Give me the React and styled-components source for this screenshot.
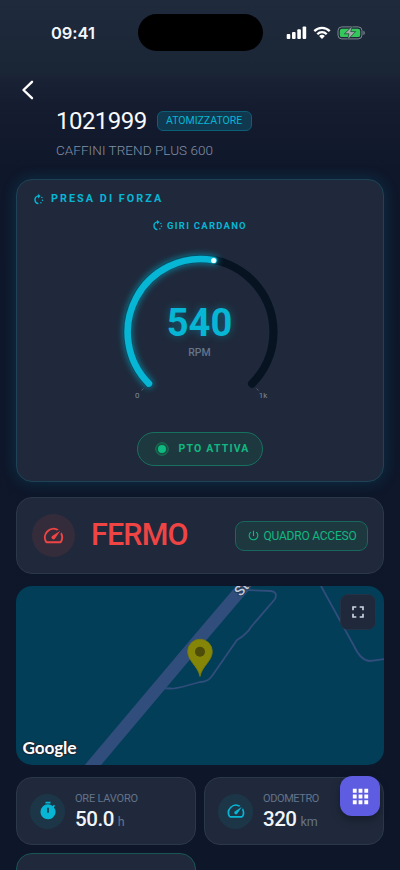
import React from "react";
import styled, { createGlobalStyle, css } from "styled-components";
import { MdSpeed, MdPowerSettingsNew, MdFullscreen, MdApps, MdTimer } from "react-icons/md";

const GlobalStyle = createGlobalStyle`
  * { box-sizing: border-box; }
  html, body { margin: 0; background: #0f172a; }
  body { font-family: Roboto, "Liberation Sans", sans-serif; overflow: hidden; }
  svg { display: block; flex: none; }
`;

const Screen = styled.main`
  position: relative;
  width: 400px;
  height: 870px;
  overflow: hidden;
  display: flex;
  flex-direction: column;
  background: linear-gradient(180deg, #1f2a3c 0, #1a2536 70px, #151c30 105px, #0f172a 170px, #0e172a 100%);
`;

const Label = styled.span`
  display: block;
  white-space: nowrap;
  line-height: 1;
  font-size: ${(p) => p.$size}px;
  font-weight: ${(p) => p.$weight || 400};
  letter-spacing: ${(p) => p.$track || 0}px;
  color: ${(p) => p.$color};
  ${(p) => p.$glow && css`text-shadow: 0 0 9px rgba(6, 182, 212, 0.4);`}
`;

const StatusBar = styled.div`
  flex: none;
  height: 64px;
  padding: 14px 35px 0 51px;
  display: grid;
  grid-template-columns: 87px 125px 1fr;
  align-items: start;
`;
const Clock = styled.span`
  padding-top: 10px;
  font: 600 16.5px/18px Inter, sans-serif;
  letter-spacing: -0.05px;
  color: #f3f6fc;
`;
const Island = styled.div`
  height: 37px;
  border-radius: 19px;
  background: #000;
`;
const StatusIcons = styled.div`
  display: flex;
  justify-content: flex-end;
  padding-top: 12px;
`;

const Header = styled.header`
  flex: none;
  height: 115px;
  padding: 16px 16px 0 20px;
`;
const BackButton = styled.button`
  display: block;
  border: 0;
  padding: 0;
  background: none;
`;
const TitleRow = styled.div`
  display: flex;
  align-items: center;
  gap: 10px;
  height: 22px;
  margin: 10px 0 0 36px;
`;
const TypeBadge = styled.div`
  display: flex;
  align-items: center;
  justify-content: center;
  width: 95px;
  height: 20px;
  border: 1px solid #0b5f77;
  border-radius: 6px;
  background: #10394f;
`;
const Subtitle = styled.div`
  margin: 12px 0 0 36px;
`;

const Content = styled.div`
  flex: none;
  display: flex;
  flex-direction: column;
  padding: 0 16px;
`;
const Panel = styled.section`
  border: 1px solid ${(p) => p.$border || "#2b384a"};
  border-radius: 16px;
  background: #1f293b;
`;
const PtoPanel = styled(Panel)`
  height: 303px;
  padding: 13px 17px 0 16px;
  display: flex;
  flex-direction: column;
  align-items: center;
  box-shadow: 0 0 15px rgba(6, 140, 180, 0.22);
`;
const SectionTitle = styled.div`
  align-self: flex-start;
  display: flex;
  align-items: center;
  gap: 7px;
  height: 13px;
`;
const GaugeTitle = styled.div`
  display: flex;
  align-items: center;
  gap: 4px;
  height: 13px;
  margin-top: 13px;
`;
const GaugeArea = styled.div`
  position: relative;
  width: 180px;
  height: 170px;
  margin-top: 3px;
`;
const Reading = styled.div`
  position: absolute;
  inset: 69px 0 auto;
  display: flex;
  flex-direction: column;
  align-items: center;
  gap: 6px;
`;
const PtoPill = styled.div`
  display: flex;
  align-items: center;
  gap: 10px;
  width: 126px;
  height: 34px;
  margin-top: 27px;
  padding-left: 17px;
  border: 1px solid #18705f;
  border-radius: 17px;
  background: #1e3840;
`;

const StatePanel = styled(Panel)`
  height: 77px;
  margin-top: 15px;
  padding: 0 15px 0 15px;
  display: flex;
  align-items: center;
`;
const IconDisc = styled.div`
  flex: none;
  display: grid;
  place-items: center;
  width: ${(p) => p.$size}px;
  height: ${(p) => p.$size}px;
  border-radius: 50%;
  color: ${(p) => p.$color};
  background: ${(p) => p.$bg};
`;
const StateName = styled.div`
  flex: 1;
  padding-left: 16px;
`;
const PowerBadge = styled.div`
  display: flex;
  align-items: center;
  justify-content: center;
  gap: 4px;
  width: 133px;
  height: 30px;
  border: 1px solid #18675c;
  border-radius: 9px;
  background: #1e3840;
  color: #10b981;
`;

const MapPanel = styled.section`
  position: relative;
  height: 179px;
  margin-top: 12px;
  overflow: hidden;
  border-radius: 16px;
  background: #023e58;
`;
const ExpandButton = styled.button`
  position: absolute;
  top: 8px;
  right: 8px;
  display: grid;
  place-items: center;
  width: 36px;
  height: 36px;
  padding: 0;
  border: 1px solid #243246;
  border-radius: 8px;
  background: #1f293b;
  color: #cbd5e1;
`;

const StatsGrid = styled.div`
  display: grid;
  grid-template-columns: 180px 180px;
  gap: 8px;
  margin-top: 12px;
`;
const StatCard = styled(Panel)`
  height: 68px;
  padding-left: 13px;
  display: flex;
  align-items: center;
  gap: 10px;
`;
const StatText = styled.div`
  display: flex;
  flex-direction: column;
  gap: 5px;
`;
const StatValue = styled.div`
  display: flex;
  align-items: baseline;
  gap: 4px;
`;
const AppsButton = styled.button`
  position: absolute;
  left: 340px;
  top: 776px;
  display: grid;
  place-items: center;
  width: 40px;
  height: 40px;
  padding: 0;
  border: 0;
  border-radius: 12px;
  background: #5e5ce0;
  color: #fff;
  box-shadow: 0 4px 10px rgba(0, 0, 0, 0.3);
`;

function PhoneStatus() {
  return (
    <StatusBar>
      <Clock>09:41</Clock>
      <Island />
      <StatusIcons>
        <svg width="79" height="14" viewBox="0 0 79 14">
          <g fill="#fff">
            <rect x="0.7" y="8" width="3.6" height="5" rx="1" />
            <rect x="6" y="6" width="3.6" height="7" rx="1" />
            <rect x="11.3" y="3.2" width="3.6" height="9.8" rx="1" />
            <rect x="16.6" y="0.4" width="3.6" height="12.6" rx="1" />
          </g>
          <g fill="none" stroke="#fff" strokeWidth="2.3">
            <path d="M28.3 5.1a10.8 10.8 0 0 1 15.4 0" />
            <path d="M31.3 8.2a6.5 6.5 0 0 1 9.4 0" />
          </g>
          <path d="M33.1 10.1a4.2 4.2 0 0 1 5.8 0L36 13.1z" fill="#fff" />
          <rect x="52" y="0.9" width="24" height="12" rx="3.8" fill="none" stroke="#7e8792" />
          <rect x="53.8" y="2.7" width="20.4" height="8.4" rx="2.2" fill="#34c759" />
          <path d="M77.4 4.8c1.8.5 1.8 3.7 0 4.2z" fill="#7e8792" />
          <path d="M66.6-.2 58.4 7.8h4.6l-1.6 6.2 8.2-8.4h-4.9z" fill="#a3aaa9" stroke="#1f4a3b" strokeWidth=".8" />
        </svg>
      </StatusIcons>
    </StatusBar>
  );
}

function RotateIcon() {
  return (
    <svg width="11" height="11" viewBox="0 0 11 11">
      <path d="M5.4 9.6A3.9 3.9 0 0 1 4.7 2h1" fill="none" stroke="#06b6d4" strokeWidth="1.3" />
      <path d="M5 0 7.6 2.1 5 4.4z" fill="#06b6d4" />
      <g fill="#06b6d4">
        <circle cx="8.9" cy="3.5" r=".75" />
        <circle cx="9.5" cy="6.3" r=".75" />
        <circle cx="7.9" cy="8.8" r=".75" />
      </g>
    </svg>
  );
}

function Gauge() {
  return (
    <svg width="180" height="170" viewBox="110 235 180 170">
      <defs>
        <filter id="glow" x="-30%" y="-30%" width="160%" height="160%">
          <feGaussianBlur stdDeviation="3.2" />
        </filter>
      </defs>
      <path d="M148.9 383.6A73 73 0 1 1 252.1 383.6" fill="none" stroke="#071321" strokeWidth="8.2" strokeLinecap="round" />
      <path d="M148.9 383.6A73 73 0 0 1 213.7 260.2" fill="none" stroke="#06b6d4" strokeWidth="9" strokeLinecap="round" opacity=".6" filter="url(#glow)" />
      <path d="M148.9 383.6A73 73 0 0 1 213.7 260.2" fill="none" stroke="#08536b" strokeWidth="8" strokeLinecap="round" />
      <path d="M148.9 383.6A73 73 0 0 1 213.7 260.3" fill="none" stroke="#06b6d4" strokeWidth="6.6" strokeLinecap="round" />
      <circle cx="213.7" cy="260.5" r="2.6" fill="#e6ffff" />
      <path d="m143.5 388.5-2 2M256.5 388.5l2 2" stroke="#526075" />
      <g fill="#7c899d" fontSize="8" fontFamily="Roboto, sans-serif">
        <text x="135" y="397.5">0</text>
        <text x="258.7" y="397.5">1k</text>
      </g>
    </svg>
  );
}

function MapDrawing() {
  return (
    <svg width="368" height="179" viewBox="16 586 368 179">
      <path d="M150 688 171 688.5Q176 689 200 682Q208 682 212 676L237 640Q247 634 251 627L275 599Q278 592 271 591L245 590" fill="none" stroke="#304d7b" strokeWidth="1.8" />
      <path d="M321 586 354 646Q361 661 370 661L385 659" fill="none" stroke="#304d7b" strokeWidth="1.8" />
      <path d="M87 772 200 638 246 584" fill="none" stroke="#304d7b" strokeWidth="12.5" />
      <text transform="translate(240.5 597) rotate(-48)" fill="#c3cbda" stroke="#223d5b" strokeWidth="2" paintOrder="stroke" fontSize="14" fontWeight="500" fontFamily="Roboto, sans-serif">Str</text>
      <path d="M200 676.5C198 666 187.7 661 187.7 651.5a12.3 12.3 0 0 1 24.6 0C212.3 661 202 666 200 676.5z" fill="#858607" stroke="#797b0b" strokeWidth=".8" />
      <circle cx="200" cy="651.8" r="5" fill="#4d4c08" />
      <text x="22.5" y="753.5" textLength="54" fill="#fff" stroke="#162b3c" strokeWidth="2.5" paintOrder="stroke" fontSize="17.5" fontWeight="700" fontFamily="Lato, sans-serif">Google</text>
    </svg>
  );
}

function Stat({ icon, label, value, unit, track, valueTrack }) {
  return (
    <StatCard>
      <IconDisc $size={35} $color="#06b6d4" $bg="#1c3648">{icon}</IconDisc>
      <StatText>
        <Label $size={11} $track={track} $color="#64748b">{label}</Label>
        <StatValue>
          <Label $size={20.5} $weight={500} $track={valueTrack} $color="#f1f5f9">{value}</Label>
          <Label $size={12.5} $color="#64748b">{unit}</Label>
        </StatValue>
      </StatText>
    </StatCard>
  );
}

export default function App() {
  return (
    <Screen>
      <GlobalStyle />
      <PhoneStatus />
      <Header>
        <BackButton aria-label="Indietro">
          <svg width="16" height="20" viewBox="0 0 16 20">
            <path d="M12 1.8 3.5 10l8.5 8.2" fill="none" stroke="#fff" strokeWidth="2.4" strokeLinecap="round" strokeLinejoin="round" />
          </svg>
        </BackButton>
        <TitleRow>
          <Label $size={24} $track={-0.55} $color="#f8fafc">1021999</Label>
          <TypeBadge><Label $size={10.5} $weight={400} $track={0} $color="#06b6d4">ATOMIZZATORE</Label></TypeBadge>
        </TitleRow>
        <Subtitle><Label $size={13.5} $weight={300} $track={0.05} $color="#8190a6">CAFFINI TREND PLUS 600</Label></Subtitle>
      </Header>
      <Content>
        <PtoPanel $border="#1d4354">
          <SectionTitle>
            <RotateIcon />
            <Label $size={10.8} $weight={700} $track={2.05} $color="#06b6d4">PRESA DI FORZA</Label>
          </SectionTitle>
          <GaugeTitle>
            <RotateIcon />
            <Label $size={9.5} $weight={700} $track={1.25} $color="#06b6d4">GIRI CARDANO</Label>
          </GaugeTitle>
          <GaugeArea>
            <Gauge />
            <Reading>
              <Label $size={38} $weight={700} $color="#06b6d4" $glow>540</Label>
              <Label $size={10.5} $weight={500} $track={0} $color="#64748b">RPM</Label>
            </Reading>
          </GaugeArea>
          <PtoPill>
            <svg width="14" height="14" viewBox="0 0 14 14">
              <circle cx="7" cy="7" r="6.3" fill="#17513f" stroke="#178263" strokeWidth=".8" />
              <circle cx="7" cy="7" r="4" fill="#10b981" />
            </svg>
            <Label $size={10.5} $weight={700} $track={1.2} $color="#10b981">PTO ATTIVA</Label>
          </PtoPill>
        </PtoPanel>
        <StatePanel>
          <IconDisc $size={43} $color="#ef4444" $bg="#352c3b"><MdSpeed size={23} /></IconDisc>
          <StateName><Label $size={30.5} $weight={500} $track={-0.85} $color="#ef4444">FERMO</Label></StateName>
          <PowerBadge>
            <MdPowerSettingsNew size={13} />
            <Label $size={12} $weight={400} $track={-0.22} $color="#10b981">QUADRO ACCESO</Label>
          </PowerBadge>
        </StatePanel>
        <MapPanel>
          <MapDrawing />
          <ExpandButton aria-label="Espandi"><MdFullscreen size={20} /></ExpandButton>
        </MapPanel>
        <StatsGrid>
          <Stat icon={<MdTimer size={20} />} label="ORE LAVORO" value="50.0" unit="h" track={-0.2} valueTrack={-0.45} />
          <Stat icon={<MdSpeed size={20} />} label="ODOMETRO" value="320" unit="km" track={-0.4} valueTrack={-0.5} />
          <StatCard $border="#1b5553" />
        </StatsGrid>
      </Content>
      <AppsButton aria-label="Menu"><MdApps size={23} /></AppsButton>
    </Screen>
  );
}
